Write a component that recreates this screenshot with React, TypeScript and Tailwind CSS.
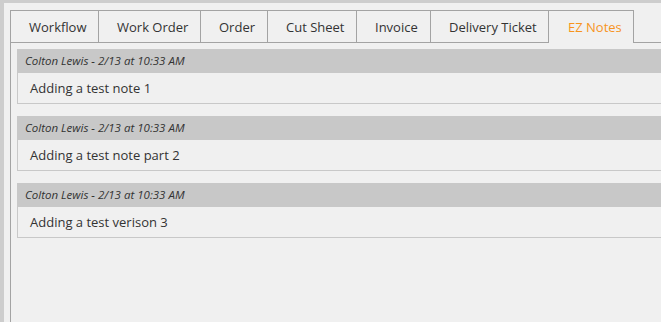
import React from "react";

const tabs = [
  { label: "Workflow", w: "w-[88px]" },
  { label: "Work Order", w: "w-[102px]" },
  { label: "Order", w: "w-[67px]" },
  { label: "Cut Sheet", w: "w-[89px]" },
  { label: "Invoice", w: "w-[74px]" },
  { label: "Delivery Ticket", w: "w-[118px]" },
];

const notes = ["Adding a test note 1", "Adding a test note part 2", "Adding a test verison 3"];

export default function App() {
  return (
    <div
      className="w-[661px] h-[322px] overflow-hidden bg-[#cdcdcd] pt-[3px] pl-[4px] text-[#333333]"
      style={{ fontFamily: '"Open Sans", "Noto Sans", sans-serif' }}
    >
      <div className="h-full bg-[#f0f0f0] pt-[7px] pl-[6px]">
        <div className="h-full border-l border-[#a3a3a3] flex flex-col">
          <div className="flex h-[33px] shrink-0">
            {tabs.map((t) => (
              <div
                key={t.label}
                className={`${t.w} shrink-0 border-t border-r border-b border-[#a3a3a3] flex items-center pl-[18px] pt-[2px] text-[13px] leading-none whitespace-nowrap`}
              >
                {t.label}
              </div>
            ))}
            <div className="w-[85px] shrink-0 border-t border-r border-[#a3a3a3] flex items-center pl-[19px] pt-[1px] text-[13px] leading-none whitespace-nowrap text-[#f7941d]">
              EZ Notes
            </div>
            <div className="flex-1 border-b border-[#a3a3a3]" />
          </div>
          <div className="pt-[6px] pl-[6px] flex flex-col gap-[12px]">
            {notes.map((n) => (
              <div key={n} className="w-[700px]">
                <div className="h-[24px] bg-[#c8c8c8] flex items-center pl-[8px] text-[11.5px] italic leading-none">
                  Colton Lewis - 2/13 at 10:33 AM
                </div>
                <div className="h-[31px] border-l border-b border-[#c8c8c8] flex items-center pl-[12px] text-[13px] leading-none">
                  {n}
                </div>
              </div>
            ))}
          </div>
        </div>
      </div>
    </div>
  );
}
